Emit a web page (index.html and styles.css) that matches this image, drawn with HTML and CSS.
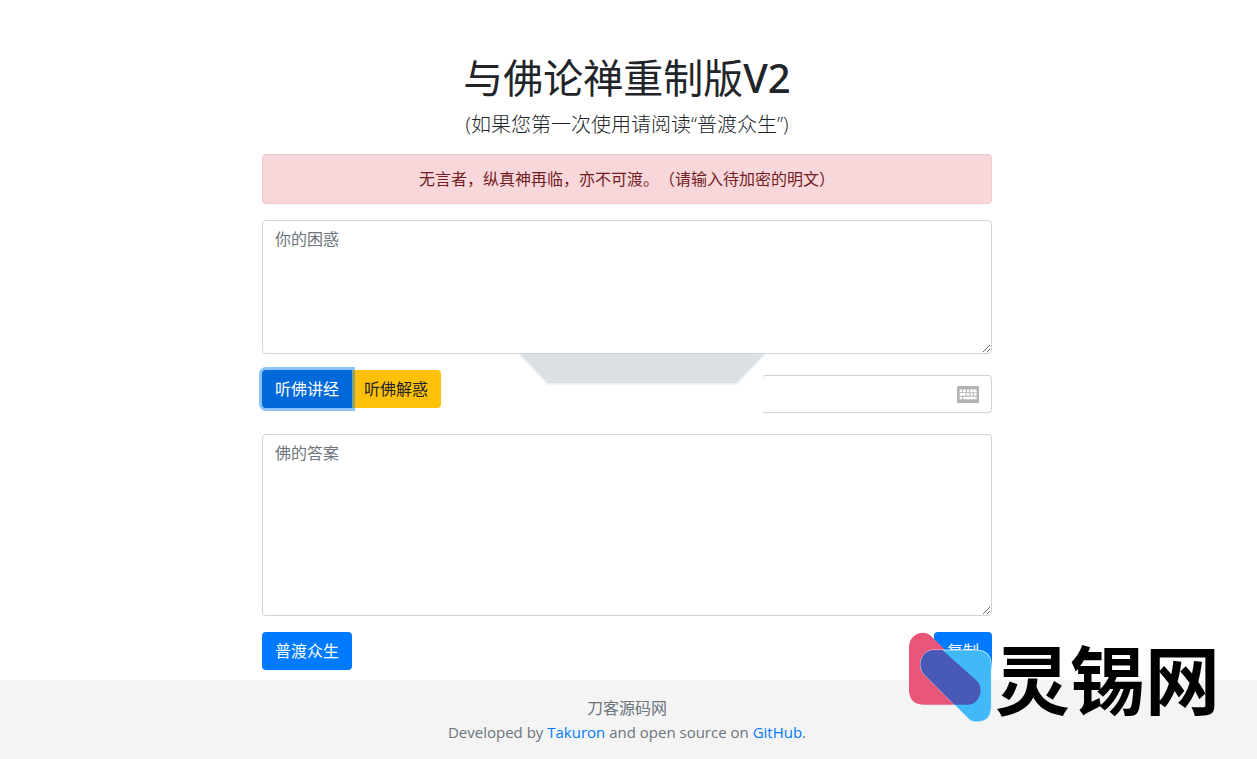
FILE: index.html
```html
<!DOCTYPE html>
<html lang="zh-CN">
<head>
<meta charset="utf-8">
<meta name="viewport" content="width=device-width, initial-scale=1">
<title>与佛论禅重制版V2</title>
<link rel="stylesheet" href="styles.css">
</head>
<body>
<main class="container">
  <h1 class="title">与佛论禅重制版<span class="version">V2</span></h1>
  <p class="lead">(如果您第一次使用请阅读<q class="quote">普渡众生</q>)</p>
  <div class="alert" role="alert">无言者，纵真神再临，亦不可渡。（请输入待加密的明文）</div>
  <textarea class="field" rows="5" placeholder="你的困惑" aria-label="你的困惑"></textarea>
  <div class="actions">
    <svg class="ribbon" viewBox="0 0 248 31" aria-hidden="true">
      <path d="M0 0H248L219 31H29Z" fill="#eef2f5"/>
      <path d="M2 0H246L218 29H30Z" fill="#dbe0e4"/>
    </svg>
    <div class="group">
      <button class="btn primary active" type="button">听佛讲经</button>
      <button class="btn warning" type="button">听佛解惑</button>
    </div>
    <div class="key">
      <input class="field key-input" type="text" aria-label="密钥">
      <svg class="keyboard" viewBox="0 0 22 17" aria-hidden="true">
        <rect width="22" height="17" rx="1" fill="#b3b3b3"/>
        <path fill="#fff" d="M2.7 3.6h2.4v2.6H2.7zM6 3.6h2.8v2.6H6zM9.7 3.6h2.4v2.6H9.7zM13 3.6h6.6v2.6H13zM2.7 7.1h5.8v2.6H2.7zM9.5 7.1h3v2.6h-3zM13.5 7.1h2.4v2.6h-2.4zM17 7.1h2.6v2.6H17zM2.7 10.7h2.4v2.6H2.7zM6 10.7h13.6v2.6H6z"/>
      </svg>
    </div>
  </div>
  <textarea class="field" rows="7" placeholder="佛的答案" aria-label="佛的答案"></textarea>
  <div class="bottom">
    <button class="btn primary" type="button">普渡众生</button>
    <button class="btn primary" type="button">复制</button>
  </div>
</main>
<footer class="footer">
  <div>刀客源码网</div>
  <div class="credit">Developed by <a href="#">Takuron</a> and open source on <a href="#">GitHub</a>.</div>
  <div class="brand">
    <svg class="brand-mark" viewBox="0 0 255 276" aria-hidden="true">
      <path fill="#ea5679" d="M3 48C3 22 22 5 46 5Q59 5 68 14L208 151C230 177 212 221 181 221H50Q3 221 3 176Z"/>
      <path fill="#41b9f8" stroke="#fff" stroke-width="2" d="M76 57H205Q250 57 250 102V230Q248 273 207 273Q193 274 184 266L48 130C24 102 43 57 76 57Z"/>
      <path fill="#485ab6" d="M76 57H103L208 151C230 177 212 221 181 221H139L48 130C24 102 43 57 76 57Z"/>
    </svg>
    <span class="brand-name">灵锡网</span>
  </div>
</footer>
</body>
</html>
```
FILE: styles.css
```css
* { box-sizing: border-box; }

body {
  margin: 0;
  min-height: 100vh;
  display: flex;
  flex-direction: column;
  background: #fff;
  color: #212529;
  font: 400 16px/24px "Open Sans", "Noto Sans CJK SC", sans-serif;
}

.container {
  width: 100%;
  max-width: 733px;
  margin: 0 auto;
  padding: 54px 3px 10px 0;
}

.title {
  margin: 0 0 8px;
  font-size: 40px;
  font-weight: 400;
  line-height: 48px;
  text-align: center;
  font-family: "Noto Sans", "Noto Sans CJK SC", sans-serif;
}

.version { font-weight: 500; }

.lead {
  margin: 0 0 14px;
  font-size: 20px;
  font-weight: 300;
  line-height: 30px;
  text-align: center;
}

.quote { quotes: "“" "”"; }

.alert {
  margin-bottom: 16px;
  padding: 12px 20px;
  border: 1px solid #f5c6cb;
  border-radius: 4px;
  background: #f8d7da;
  color: #721c24;
  text-align: center;
  text-spacing-trim: space-all;
}

.field {
  display: block;
  width: 100%;
  padding: 6px 12px;
  border: 1px solid #ced4da;
  border-radius: 4px;
  background: #fff;
  color: #495057;
  font: inherit;
}

.field::placeholder { color: #6c757d; opacity: 1; }

.actions {
  position: relative;
  display: flex;
  justify-content: space-between;
  align-items: flex-start;
  padding-top: 16px;
  margin-bottom: 21px;
}

.ribbon {
  position: absolute;
  top: 0;
  left: 35%;
  width: 34%;
}

.group { display: flex; }

.btn {
  padding: 6px 12px;
  border: 1px solid transparent;
  border-radius: 4px;
  font: inherit;
}

.primary { background: #007bff; color: #fff; }

.warning {
  border-left: 0;
  border-radius: 0 4px 4px 0;
  background: #ffc107;
  color: #212529;
}

.active {
  position: relative;
  background: #0069d9;
  border-radius: 4px 0 0 4px;
  box-shadow: 0 0 0 3px rgba(0, 123, 255, 0.45);
}

.key {
  position: relative;
  width: 230px;
  margin-top: 5px;
}

.key-input {
  height: 38px;
  padding-right: 44px;
  border-left-color: transparent;
}

.keyboard {
  position: absolute;
  top: 11px;
  right: 13px;
  width: 22px;
}

.bottom {
  display: flex;
  justify-content: space-between;
  margin-top: 16px;
}

.footer {
  position: relative;
  flex: 1;
  padding: 16px 3px 14px 0;
  background: #f4f4f4;
  color: #6c757d;
  text-align: center;
}

.credit { font-size: 15px; }

.footer a { color: #007bff; text-decoration: none; }

.brand {
  position: absolute;
  right: 37px;
  bottom: 36px;
  display: flex;
  align-items: center;
  gap: 2px;
}

.brand-mark { width: 85px; height: 92px; }

.brand-name {
  color: #000;
  font: 700 75px/92px "Noto Sans CJK SC", sans-serif;
}
```
